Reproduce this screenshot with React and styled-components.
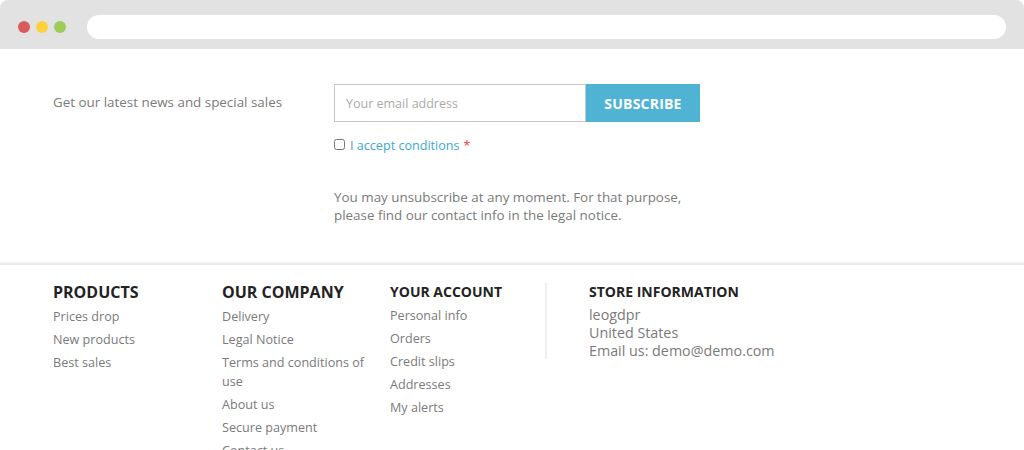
import React from "react"
import styled, { createGlobalStyle } from "styled-components"

const GlobalStyle = createGlobalStyle`
  html, body {
    margin: 0;
    padding: 0;
    background: #fff;
    font-family: "Open Sans", "Noto Sans", sans-serif;
    overflow: hidden;
  }
  * { box-sizing: border-box; }
`

const Window = styled.div`
  width: 1024px;
  height: 450px;
  overflow: hidden;
  background: #fff;
`

const TitleBar = styled.div`
  height: 49px;
  background: #e2e2e2;
  border-radius: 8px 8px 0 0;
  display: flex;
  align-items: center;
  padding: 0 18px 0 18px;
`

const Dots = styled.div`
  display: flex;
  gap: 6px;
  margin-top: 4px;
  margin-right: 21px;
`

const Dot = styled.span`
  width: 12px;
  height: 12px;
  border-radius: 50%;
  background: ${p => p.color};
`

const UrlBar = styled.div`
  flex: 1;
  height: 24px;
  margin-top: 4px;
  background: #fff;
  border-radius: 12px;
`

const Newsletter = styled.section`
  display: flex;
  padding: 35px 0 0 53px;
  height: 213px;
`

const NewsLabel = styled.p`
  margin: 9px 0 0;
  width: 281px;
  font-size: 13.4px;
  color: #7a7a7a;
`

const FormCol = styled.div`
  display: flex;
  flex-direction: column;
`

const InputRow = styled.div`
  display: flex;
  height: 38px;
`

const EmailInput = styled.input`
  width: 252px;
  height: 38px;
  border: 1px solid #c8c8c8;
  padding: 0 11px;
  font-family: inherit;
  font-size: 12.5px;
  color: #7a7a7a;
  outline: none;
  &::placeholder { color: #aaa; }
`

const SubscribeButton = styled.button`
  width: 114px;
  height: 38px;
  border: none;
  background: #4fb3d4;
  color: #fff;
  font-family: inherit;
  font-weight: 700;
  font-size: 14px;
  letter-spacing: 0.2px;
  text-transform: uppercase;
  cursor: pointer;
`

const Conditions = styled.label`
  display: flex;
  align-items: center;
  margin-top: 15px;
  font-size: 12.6px;
  color: #3ea7cf;
`

const Check = styled.input`
  width: 11px;
  height: 11px;
  margin: 0 5px 0 0;
  position: relative;
  top: -1px;
`

const Required = styled.span`
  color: #f23d3d;
  margin-left: 4px;
`

const Notice = styled.p`
  margin: 34px 0 0;
  width: 370px;
  font-size: 13.4px;
  line-height: 18px;
  color: #7a7a7a;
`

const Separator = styled.div`
  height: 3px;
  background: linear-gradient(#f4f4f4, #e6e6e6);
`

const Footer = styled.footer`
  display: flex;
  padding: 16px 0 0 53px;
`

const LinkCol = styled.div`
  width: ${p => p.width}px;
  padding-right: 12px;
`

const Heading = styled.h4`
  margin: 0 0 ${p => (p.large ? "4px" : "3px")};
  font-size: ${p => (p.large ? "16px" : "14px")};
  line-height: 22px;
  font-weight: 700;
  color: #232323;
  text-transform: uppercase;
`

const LinkList = styled.ul`
  list-style: none;
  margin: 0;
  padding: 0;
`

const LinkItem = styled.li`
  font-size: 12.6px;
  line-height: 19px;
  color: #7a7a7a;
  margin-bottom: 4px;
`

const AccountCol = styled.div`
  width: 157px;
  border-right: 2px solid #efefef;
  height: 76px;
  margin-top: 2px;
`

const AccountInner = styled.div`
  margin-top: -2px;
`

const StoreCol = styled.div`
  padding-left: 42px;
`

const StoreText = styled.div`
  font-size: 14.3px;
  line-height: 18px;
  color: #7a7a7a;
`

const columns = [
  { title: "Products", width: 169, links: ["Prices drop", "New products", "Best sales"] },
  {
    title: "Our company",
    width: 168,
    links: [
      "Delivery",
      "Legal Notice",
      "Terms and conditions of use",
      "About us",
      "Secure payment",
      "Contact us",
    ],
  },
]

const account = ["Personal info", "Orders", "Credit slips", "Addresses", "My alerts"]

const App = () => (
  <Window>
    <GlobalStyle />
    <TitleBar>
      <Dots>
        <Dot color="#d95b5b" />
        <Dot color="#fdd13d" />
        <Dot color="#9ecb5a" />
      </Dots>
      <UrlBar />
    </TitleBar>

    <Newsletter>
      <NewsLabel>Get our latest news and special sales</NewsLabel>
      <FormCol>
        <InputRow>
          <EmailInput type="email" placeholder="Your email address" />
          <SubscribeButton>Subscribe</SubscribeButton>
        </InputRow>
        <Conditions>
          <Check type="checkbox" />
          I accept conditions <Required>*</Required>
        </Conditions>
        <Notice>
          You may unsubscribe at any moment. For that purpose, please find our
          contact info in the legal notice.
        </Notice>
      </FormCol>
    </Newsletter>

    <Separator />

    <Footer>
      {columns.map(col => (
        <LinkCol key={col.title} width={col.width}>
          <Heading large>{col.title}</Heading>
          <LinkList>
            {col.links.map(l => (
              <LinkItem key={l}>{l}</LinkItem>
            ))}
          </LinkList>
        </LinkCol>
      ))}
      <AccountCol>
        <AccountInner>
          <Heading>Your account</Heading>
          <LinkList>
            {account.map(l => (
              <LinkItem key={l}>{l}</LinkItem>
            ))}
          </LinkList>
        </AccountInner>
      </AccountCol>
      <StoreCol>
        <Heading>Store information</Heading>
        <StoreText>
          leogdpr
          <br />
          United States
          <br />
          Email us: demo@demo.com
        </StoreText>
      </StoreCol>
    </Footer>
  </Window>
)

export default App
